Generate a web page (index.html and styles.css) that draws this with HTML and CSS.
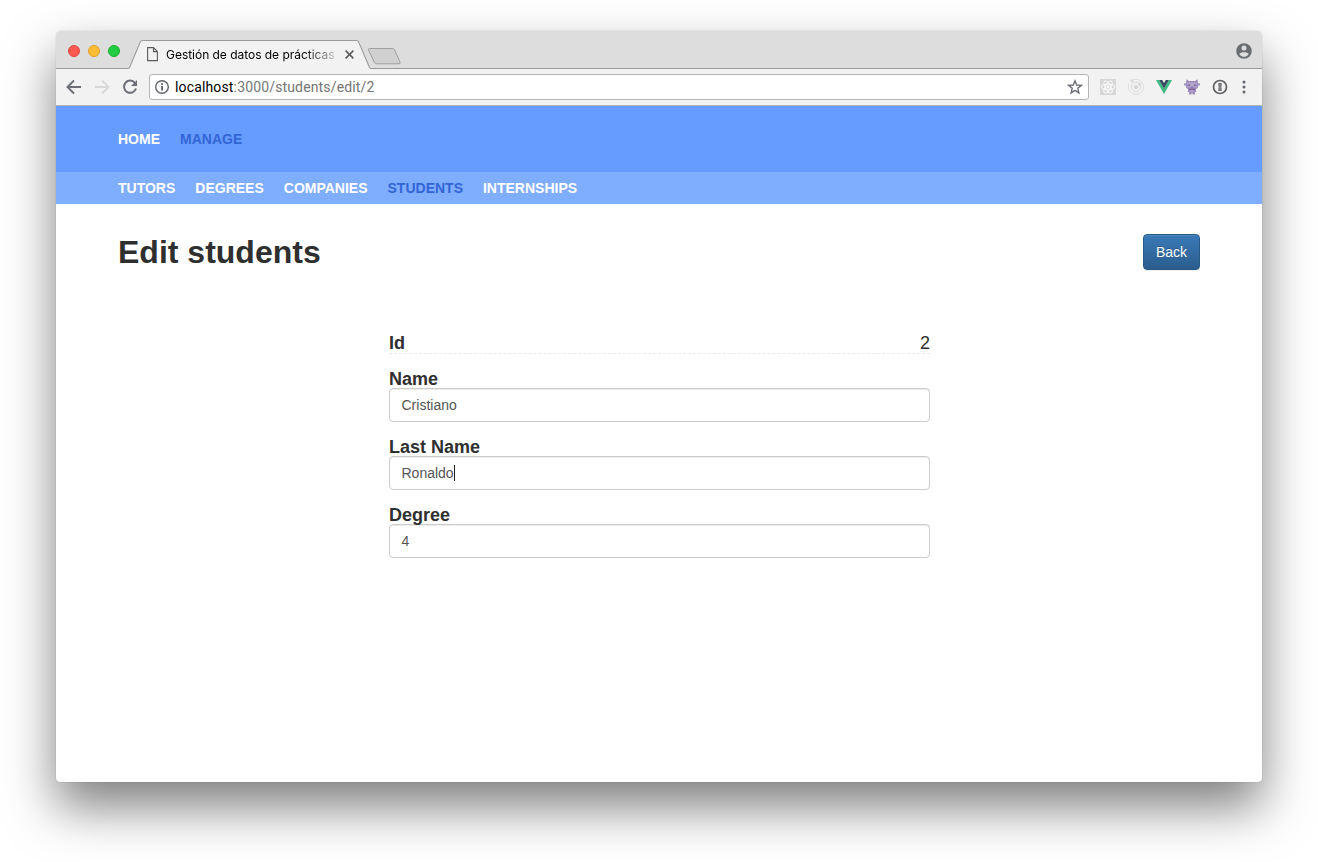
FILE: index.html
```html
<!DOCTYPE html>
<html lang="en">
<head>
<meta charset="utf-8">
<title>Gestión de datos de prácticas</title>
<link rel="stylesheet" href="styles.css">
</head>
<body>
<div class="window">
  <div class="tabstrip">
    <div class="lights"><i class="light red"></i><i class="light yellow"></i><i class="light green"></i></div>
    <div class="tab">
      <svg class="tab-shape" width="243" height="29" viewBox="0 0 242 29" preserveAspectRatio="none"><path d="M0 28.500 Q1.200 28.500 1.800 27 L12.200 2 Q13 .5 14.500 .5 H227.500 Q229 .5 229.700 2 L240.300 27 Q241 28.500 242 28.500 V29 H0Z" fill="#f2f2f2"/><path d="M0 28.500 Q1.200 28.500 1.800 27 L12.200 2 Q13 .5 14.500 .5 H227.500 Q229 .5 229.700 2 L240.300 27 Q241 28.500 242 28.500" fill="none" stroke="#999"/></svg>
      <svg class="page-icon" width="12" height="15" viewBox="0 0 12 15" fill="none" stroke="#5a5a5a" stroke-width="1.1"><path d="M.6 .6H6.500L10.400 4.500V13.600H.6ZM6.500 .8V4.600H10.300"/></svg>
      <span class="tab-title">Gestión de datos de prácticas</span>
      <svg class="tab-close" width="9" height="9" viewBox="0 0 9 9" stroke="#5a5a5a" stroke-width="1.5"><path d="M.6 .6 8.400 8.400M8.400 .6 .6 8.400"/></svg>
    </div>
    <svg class="new-tab" width="35" height="17" viewBox="0 0 35 17"><path d="M2.500 .5H25.500Q27 .5 27.700 2L33 14Q33.700 15.800 32 15.800H9.500Q8 15.800 7.300 14.300L1.500 2Q1 .5 2.500 .5Z" fill="#d0d0d0" stroke="#a0a0a0"/></svg>
    <svg class="profile" width="16" height="16" viewBox="0 0 16 16"><circle cx="8" cy="8" r="7.800" fill="#6a6e72"/><circle cx="8" cy="5.100" r="2.500" fill="#ddd"/><path d="M3.300 10.900C4.500 8.700 11.500 8.700 12.700 10.900 11.500 12.800 9.900 13.700 8 13.700S4.500 12.800 3.300 10.900Z" fill="#ddd"/></svg>
  </div>
  <div class="toolbar">
    <svg class="nav-icon" width="16" height="16" viewBox="0 0 16 16" fill="none" stroke="#6c6f75" stroke-width="1.900"><path d="M15 8H2.300M8 1.500 1.500 8 8 14.500"/></svg>
    <svg class="nav-icon" width="16" height="16" viewBox="0 0 16 16" fill="none" stroke="#d7d8da" stroke-width="1.900"><path d="M1 8H13.700M8 1.500 14.500 8 8 14.500"/></svg>
    <svg class="nav-icon" width="16" height="16" viewBox="0 0 16 16"><path d="M13 4A6.100 6.100 0 1 0 14 9.500" fill="none" stroke="#6c6f75" stroke-width="2"/><path d="M15 1V7H9Z" fill="#6c6f75"/></svg>
    <div class="omnibox">
      <svg class="info" width="14" height="14" viewBox="0 0 14 14"><circle cx="7" cy="7" r="6.300" fill="none" stroke="#606469" stroke-width="1.400"/><path d="M6.200 6h1.700v4.500H6.200zM6.200 3.300h1.700v1.600H6.200z" fill="#505459"/></svg>
      <span class="url"><b>localhost</b>:3000/students/edit/2</span>
      <svg class="star" width="16" height="16" viewBox="0 0 16 16"><path d="M8 1.800 9.700 6 14.300 6.400 10.800 9.300 11.900 13.900 8 11.400 4.100 13.900 5.200 9.300 1.700 6.400 6.300 6Z" fill="none" stroke="#6c6f75" stroke-width="1.400"/></svg>
    </div>
    <div class="extensions">
      <svg width="16" height="16" viewBox="0 0 16 16"><path d="M0 0h16v16H0z" fill="#d7d7d7"/><g fill="none" stroke="#f8f8f8" stroke-width="1.100"><ellipse cx="8" cy="8" rx="6.600" ry="2.700"/><ellipse cx="8" cy="8" rx="6.600" ry="2.700" transform="rotate(60 8 8)"/><ellipse cx="8" cy="8" rx="6.600" ry="2.700" transform="rotate(120 8 8)"/></g><circle cx="8" cy="8" r="1.400" fill="#fff"/></svg>
      <svg width="16" height="16" viewBox="0 0 16 16" fill="none" stroke="#dedede"><path d="M4.500 1.200A7.500 7.500 0 1 1 1.200 4.600"/><circle cx="8" cy="8" r="4.700"/><circle cx="8" cy="8" r="2" fill="#d5d5d5"/><circle cx="4" cy="2" r="1.200" fill="#d0d0d0"/><circle cx="11.500" cy="5" r="1.200" fill="#d0d0d0"/></svg>
      <svg width="16" height="16" viewBox="0 0 16 16"><path d="M0 1H3.200L8 9.400 12.800 1H16L8 15Z" fill="#41b883"/><path d="M3.200 1H6.200L8 4.200 9.800 1H12.800L8 9.400Z" fill="#35495e"/></svg>
      <svg width="16" height="16" viewBox="0 0 16 16"><path d="M2.500 .3 5 2H11L13.500 .3 14 4.500H16V6.500H14V8.500L11.700 10.500 12.300 13H10.900V15.500H8.600V14.500H7.400V15.500H5.100V13H3.700L4.300 10.500 2 8.500V6.500H0V4.500H2Z" fill="#9b8abb"/><path d="M3.500 3.500h9v5h-9zM6.500 11h3v2.500h-3z" fill="#b5a7cd"/><path d="M4.500 5.500H6V7H4.500zM10 5.500h1.500V7H10zM6.500 7.800h3v.8h-3zM5 9.800h6v.9H5z" fill="#6c5a8c"/></svg>
      <svg width="16" height="16" viewBox="0 0 16 16"><circle cx="8" cy="8" r="6.500" fill="#f2f2f2" stroke="#606164" stroke-width="1.700"/><path d="M6.400 4h3.200v3.300L9 8l.6.700V12H6.400V8.700L7 8l-.6-.7z" fill="#606164"/><path d="M7.600 5h.8v6h-.8z" fill="#b5b5b5"/></svg>
    </div>
    <svg class="menu" width="4" height="16" viewBox="0 0 4 16" fill="#64676b"><circle cx="2" cy="3" r="1.500"/><circle cx="2" cy="8" r="1.500"/><circle cx="2" cy="13" r="1.500"/></svg>
  </div>
  <div class="page">
    <nav class="nav main-nav"><a>HOME</a><a class="active">MANAGE</a></nav>
    <nav class="nav sub-nav"><a>TUTORS</a><a>DEGREES</a><a>COMPANIES</a><a class="active">STUDENTS</a><a>INTERNSHIPS</a></nav>
    <header class="heading"><h1>Edit students</h1><button class="back">Back</button></header>
    <form class="form">
      <div class="id-row"><strong>Id</strong><span>2</span></div>
      <div class="field"><label>Name</label><div class="input">Cristiano</div></div>
      <div class="field"><label>Last Name</label><div class="input">Ronaldo<i class="caret"></i></div></div>
      <div class="field"><label>Degree</label><div class="input">4</div></div>
    </form>
  </div>
</div>
</body>
</html>
```
FILE: styles.css
```css
* { box-sizing: border-box; }
body { margin: 0; padding: 31px 56px 80px; height: 862px; background: #fff; overflow: hidden; font-family: "Liberation Sans", Arial, sans-serif; color: #2f2f2f; }
svg { display: block; flex: none; }
.window { height: 751px; border-radius: 5px 5px 4px 4px; background: #fff; box-shadow: 0 0 1px rgba(0,0,0,.4), 0 25px 50px rgba(0,0,0,.5); display: flex; flex-direction: column; }
.tabstrip { height: 38px; background: #ddd; border-bottom: 1px solid #999; border-radius: 5px 5px 0 0; display: flex; flex: none; align-items: flex-start; }
.lights { display: flex; gap: 8px; padding: 14px 0 0 12px; width: 72px; flex: none; }
.light { width: 12px; height: 12px; border-radius: 50%; flex: none; }
.red { background: #ff5a52; border: 1px solid #e2463f; }
.yellow { background: #fdbc34; border: 1px solid #dfa023; }
.green { background: #22cc45; border: 1px solid #1aad29; }
.tab { position: relative; width: 243px; height: 29px; margin-top: 9px; display: flex; align-items: center; flex: none; padding-left: 19px; }
.tab-shape { position: absolute; left: 0; top: 0; }
.page-icon, .tab-title, .tab-close { position: relative; }
.tab-title { width: 171px; margin-left: 7px; white-space: nowrap; font: 12px/18px Inter, sans-serif; letter-spacing: -.03px; color: #000; -webkit-mask-image: linear-gradient(90deg, #000 80%, rgba(0,0,0,.15)); mask-image: linear-gradient(90deg, #000 80%, rgba(0,0,0,.15)); }
.tab-close { margin-left: 8px; }
.new-tab { margin: 17px 0 0 -4px; }
.profile { margin: 12px 10px 0 auto; }
.toolbar { height: 37px; background: #f2f2f2; border-bottom: 1px solid #b4b4b4; flex: none; display: flex; align-items: center; padding: 0 16px 0 10px; }
.nav-icon { margin-right: 12px; }
.omnibox { width: 940px; height: 26px; margin-left: -1px; border: 1px solid #b5b5b5; border-radius: 3px; background: #fff; display: flex; align-items: center; padding: 0 5px; }
.url { margin-left: 6px; font: 14px/20px Roboto, sans-serif; color: #757575; letter-spacing: .15px; }
.url b { font-weight: 400; color: #000; }
.star { margin-left: auto; }
.extensions { display: flex; gap: 12px; margin-left: 11px; }
.menu { margin-left: 14px; }
.nav { display: flex; gap: 20px; padding-left: 62px; align-items: center; font-size: 14px; font-weight: 700; color: #fff; }
.main-nav { height: 66px; background: #679cff; }
.sub-nav { height: 32px; background: #7fadff; }
.active { color: #3265d6; }
.heading { display: flex; justify-content: space-between; padding: 30px 62px 0; height: 66px; }
h1 { margin: 0; font-size: 32px; line-height: 36px; }
.back { width: 57px; height: 36px; padding: 0; border: 1px solid #265a87; border-radius: 4px; background: linear-gradient(#3a7ab8, #2b5d8d); color: #fff; font: 14px/20px "Liberation Sans", Arial, sans-serif; box-shadow: inset 0 1px 0 rgba(255,255,255,.1), 0 1px 1px rgba(0,0,0,.07); text-shadow: 0 -1px 0 rgba(0,0,0,.2); }
.form { width: 541px; margin: 63px 0 0 333px; font-size: 18px; line-height: 20px; }
.id-row { display: flex; justify-content: space-between; height: 21px; border-bottom: 1px dashed #eaeaea; margin-bottom: 15px; }
.field { margin-bottom: 15px; }
.field label { display: block; height: 19px; font-weight: 700; }
.input { height: 34px; border: 1px solid #ccc; border-radius: 4px; background: #fff; box-shadow: inset 0 1px 1px rgba(0,0,0,.075); padding: 0 11.5px; display: flex; align-items: center; font-size: 14px; color: #555; }
.caret { width: 1px; height: 16px; background: #222; }
```
